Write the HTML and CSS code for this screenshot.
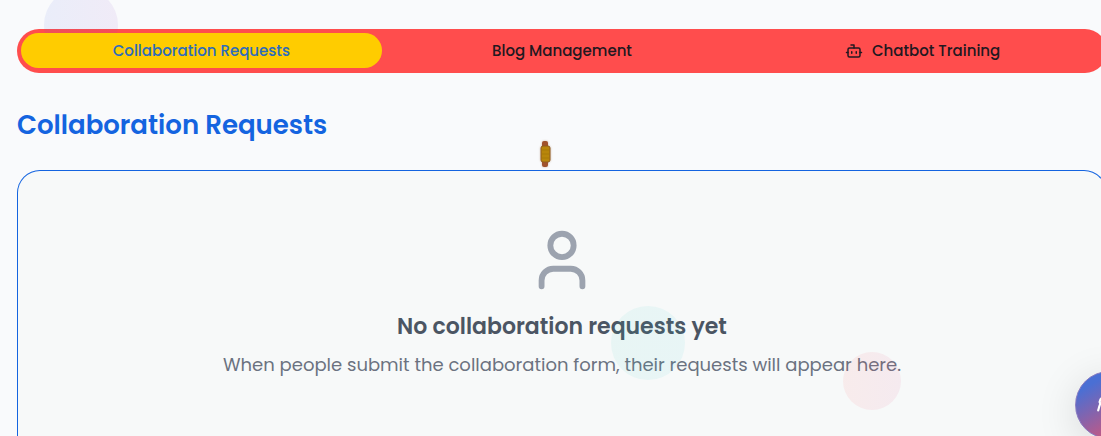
FILE: index.html
```html
<!DOCTYPE html>
<html lang="en">
<head>
<meta charset="utf-8">
<meta name="viewport" content="width=device-width, initial-scale=1">
<title>Collaboration Requests</title>
<link rel="stylesheet" href="styles.css">
</head>
<body>
<main class="page">
  <div class="tabs" role="tablist">
    <button class="tab tab-active" role="tab" aria-selected="true">Collaboration Requests</button>
    <button class="tab" role="tab" aria-selected="false">Blog Management</button>
    <button class="tab" role="tab" aria-selected="false">
      <svg class="tab-icon" viewBox="0 0 24 24" aria-hidden="true"><path d="M12 8V4H8"/><rect width="16" height="12" x="4" y="8" rx="2"/><path d="M2 14h2M20 14h2M15 13v2M9 13v2"/></svg>
      Chatbot Training
    </button>
  </div>
  <h2 class="heading">Collaboration Requests</h2>
  <section class="panel">
    <svg class="user-icon" viewBox="0 0 24 24" aria-hidden="true"><path d="M19 21v-2a4 4 0 0 0-4-4H9a4 4 0 0 0-4 4v2"/><circle cx="12" cy="7" r="4"/></svg>
    <h3 class="empty-title">No collaboration requests yet</h3>
    <p class="empty-text">When people submit the collaboration form, their requests will appear here.</p>
  </section>
</main>
<div class="orb orb-violet"></div>
<div class="orb orb-teal"></div>
<div class="orb orb-rose"></div>
<svg class="scroll-charm" viewBox="0 0 12 28" aria-hidden="true">
  <rect x="3" y="1" width="6" height="26" rx="2" fill="#a0522d"/>
  <rect x="2" y="6" width="9" height="16" rx="2" fill="#b8860b" stroke="#8f5a20"/>
  <path d="M3 10h7M3 14h7M3 18h7" stroke="#a87a08" fill="none"/>
</svg>
<button class="chat-button" aria-label="Open chat">
  <svg class="chat-icon" viewBox="0 0 24 24" aria-hidden="true"><path d="M8 5a4 4 0 0 0-4 6c-1 1-1 3-2 6M8 5h8a4 4 0 0 1 4 6c1 1 1 3 2 6M4 11h3"/></svg>
</button>
</body>
</html>
```
FILE: styles.css
```css
* { box-sizing: border-box; }

body {
  margin: 0;
  min-height: 100vh;
  overflow: hidden;
  background: #f9fafc;
  color: #14161c;
  font-family: Poppins, Inter, "Open Sans", sans-serif;
}

.page {
  display: flex;
  flex-direction: column;
  min-height: 100vh;
  margin-right: -6px;
  padding: 29px 0 0 17px;
}

.tabs {
  display: grid;
  grid-template-columns: repeat(3, 1fr);
  height: 44px;
  padding: 4px 4px 5px;
  border-radius: 22px;
  background: #ff4d4d;
}

.tab {
  display: flex;
  align-items: center;
  justify-content: center;
  gap: 9px;
  border: 0;
  padding: 0;
  border-radius: 18px;
  background: transparent;
  color: #221820;
  font: inherit;
  font-size: 15px;
  font-weight: 500;
  cursor: pointer;
}

.tab-active {
  background: #ffcc00;
  color: #2d6bbd;
}

.tab-icon {
  width: 18px;
  height: 18px;
  fill: none;
  stroke: currentColor;
  stroke-width: 2;
  stroke-linecap: round;
  stroke-linejoin: round;
}

.heading {
  margin: 35px 0 27px;
  color: #1464e0;
  font-size: 26px;
  font-weight: 600;
  line-height: 35px;
}

.panel {
  display: flex;
  flex: 1;
  flex-direction: column;
  align-items: center;
  padding: 54px 24px;
  border: 1px solid #1464e0;
  border-bottom: 0;
  border-radius: 23px 23px 0 0;
  background: #f7f9f9;
}

.user-icon {
  flex: none;
  width: 70px;
  height: 70px;
  fill: none;
  stroke: #9ca3af;
  stroke-width: 2;
  stroke-linecap: round;
  stroke-linejoin: round;
}

.empty-title {
  margin: 16px 0 8px;
  color: #4b5563;
  font-size: 22px;
  font-weight: 600;
  line-height: 32px;
}

.empty-text {
  margin: 0;
  color: #6b7280;
  font-size: 18px;
  line-height: 28px;
}

.orb {
  position: absolute;
  border-radius: 50%;
  pointer-events: none;
}

.orb-violet {
  top: -12px;
  left: 44px;
  width: 74px;
  height: 74px;
  background: linear-gradient(90deg, #3b5bdb, #8b3fc0);
  opacity: 0.08;
  clip-path: inset(0 0 29px);
}

.orb-teal {
  top: 306px;
  left: 611px;
  width: 74px;
  height: 74px;
  background: linear-gradient(90deg, #20c4b4, #20c4cc);
  opacity: 0.07;
}

.orb-rose {
  top: 352px;
  left: 843px;
  width: 58px;
  height: 58px;
  background: linear-gradient(90deg, #ff5050, #dc4080);
  opacity: 0.08;
}

.scroll-charm {
  position: absolute;
  top: 140px;
  left: 539px;
  width: 12px;
  height: 28px;
  filter: drop-shadow(0 0 1px #8b5a2b66);
}

.chat-button {
  position: absolute;
  top: 371px;
  right: -42px;
  display: flex;
  align-items: center;
  justify-content: center;
  width: 68px;
  height: 68px;
  padding: 0;
  border: 1px solid #8a7cc0;
  border-radius: 50%;
  background: linear-gradient(150deg, #4a6fd4 20%, #8b62a8 52%, #d0567c 85%);
  box-shadow: 0 8px 40px #00000020;
}

.chat-icon {
  width: 26px;
  height: 26px;
  fill: none;
  stroke: #ffffff;
  stroke-width: 2;
  stroke-linecap: round;
}
```
